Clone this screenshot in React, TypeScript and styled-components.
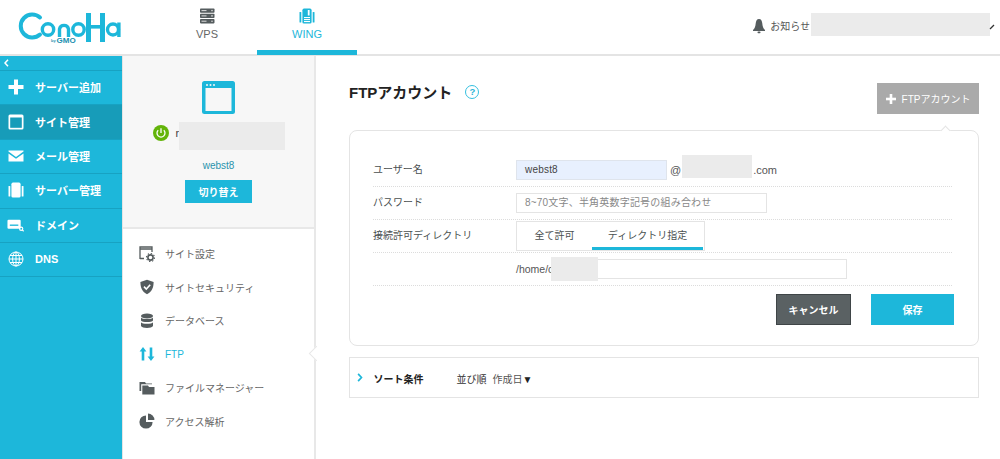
import React from "react";
import styled, { createGlobalStyle } from "styled-components";

const FONT = `"Liberation Sans", "Noto Sans CJK JP", sans-serif`;
const BLUE = "#1db7da";

const Global = createGlobalStyle`
  html, body { margin: 0; padding: 0; background: #fff; overflow: hidden; }
  body { font-family: ${FONT}; color: #4a4f50; }
  * { box-sizing: border-box; }
`;

const Page = styled.div`
  width: 1000px; height: 459px; display: flex; flex-direction: column; overflow: hidden; position: relative;
`;
const Header = styled.header`
  height: 56px; flex: none; display: flex; border-bottom: 2px solid #e4e4e4; position: relative;
`;
const LogoBox = styled.div`
  width: 157px; flex: none; padding: 8px 0 0 18px;
`;
const TopTab = styled.div<{ $active?: boolean }>`
  width: 100px; height: 55px; display: flex; flex-direction: column; align-items: center; padding-top: 8px; gap: 3px;
  font-size: 11px; line-height: 14px; color: ${(p) => (p.$active ? BLUE : "#666")};
  border-bottom: ${(p) => (p.$active ? `5px solid ${BLUE}` : "none")};
`;
const Notice = styled.div`
  margin-left: auto; margin-right: 190px; display: flex; align-items: center; gap: 4px; font-size: 10px; color: #555; height: 51px;
`;
const Mask = styled.div<{ $x: number; $y: number; $w: number; $h: number }>`
  position: absolute; left: ${(p) => p.$x}px; top: ${(p) => p.$y}px; width: ${(p) => p.$w}px; height: ${(p) => p.$h}px; background: #ebebeb;
`;
const Tick = styled.svg`
  position: absolute; left: 989px; top: 24px;
`;
const Body = styled.div`
  flex: 1; display: flex; min-height: 0;
`;
const Sidebar = styled.nav`
  width: 123px; flex: none; background: ${BLUE}; border-right: 1px solid #e4e4e4; display: flex; flex-direction: column;
`;
const Collapse = styled.div`
  height: 15px; padding-left: 4px; border-bottom: 1px solid #17a2c2; display: flex; align-items: center;
`;
const SideItem = styled.div<{ $active?: boolean }>`
  height: 34.4px; flex: none; display: flex; align-items: center; padding-left: 7px; padding-bottom: 1px; gap: 11px; color: #fff;
  font-size: 11px; font-weight: 700; border-bottom: 1px solid #17a2c2;
  background: ${(p) => (p.$active ? "#179cb9" : "transparent")};
`;
const SideIcon = styled.span`
  width: 17px; height: 17px; display: flex; align-items: center; justify-content: center; flex: none;
`;
const Second = styled.aside`
  width: 193px; flex: none; border-right: 2px solid #e8e8e8; display: flex; flex-direction: column; position: relative;
`;
const SiteBox = styled.div`
  height: 173px; flex: none; background: #f7f7f7; border-bottom: 2px solid #e8e8e8; display: flex; flex-direction: column; align-items: center; padding-top: 25px;
`;
const StatusRow = styled.div`
  display: flex; align-items: center; width: 130px; margin: 9px 0 0 0; height: 20px; font-size: 11px; color: #444; gap: 7px; position: relative; left: -1px;
`;
const SiteName = styled.div`
  margin-top: 16px; font-size: 10px; line-height: 14px; color: #2a93ad;
`;
const SwitchBtn = styled.div`
  margin-top: 7px; width: 67px; height: 23px; background: ${BLUE}; color: #fff; font-size: 10px; font-weight: 700; display: flex; align-items: center; justify-content: center;
`;
const SubNav = styled.div`
  display: flex; flex-direction: column; padding-top: 8px;
`;
const SubItem = styled.div<{ $active?: boolean }>`
  height: 33.5px; flex: none; display: flex; align-items: center; padding-left: 16px; gap: 10px; font-size: 10px; color: ${(p) => (p.$active ? BLUE : "#666")};
`;
const Notch = styled.span`
  position: absolute; right: -2px; top: 292px; width: 11px; height: 11px; background: #fff; border-left: 1.5px solid #e8e8e8; border-bottom: 1.5px solid #e8e8e8; transform: translateX(6px) rotate(45deg); transform-origin: center;
`;
const Main = styled.main`
  flex: 1; padding: 0 22px 0 33px; position: relative;
`;
const TitleRow = styled.div`
  height: 74px; display: flex; align-items: flex-start; position: relative;
`;
const Title = styled.h1`
  margin: 27px 0 0 0; font-size: 15px; line-height: 20px; font-weight: 700; color: #222;
`;
const Help = styled.span`
  margin: 29px 0 0 13px; width: 14px; height: 14px; border: 1.5px solid #35c0e0; border-radius: 50%; color: #2bb5d6; font-size: 9.5px; line-height: 11px; text-align: center; font-weight: 700;
`;
const AddBtn = styled.div`
  margin: 27px 0 0 auto; width: 102px; height: 31px; background: #aaaaaa; color: #fff; font-size: 10px; display: flex; align-items: center; justify-content: center; gap: 6px;
`;
const Card = styled.section`
  width: 630px; height: 216px; border: 1.5px solid #e4e4e4; border-radius: 8px; padding: 23px 26px 0 23px; position: relative; display: flex; flex-direction: column;
`;
const CardCaret = styled.span`
  position: absolute; right: 29px; top: -4px; width: 7px; height: 7px; background: #fff; border-left: 1.5px solid #e4e4e4; border-top: 1.5px solid #e4e4e4; transform: rotate(45deg);
`;
const Row = styled.div<{ $h: number }>`
  height: ${(p) => p.$h}px; flex: none; display: flex; align-items: center; border-bottom: 1.5px dotted #dcdcdc;
`;
const Label = styled.div`
  width: 143px; flex: none; font-size: 10px; line-height: 12px; padding-bottom: 1px; color: #4a4f50;
`;
const Field = styled.div<{ $w: number; $fill?: boolean; $ph?: boolean }>`
  width: ${(p) => p.$w}px; height: 20px; flex: none; border: 1.5px solid ${(p) => (p.$fill ? "#dfe4ec" : "#e4e4e4")}; background: ${(p) => (p.$fill ? "#e8f0fe" : "#fff")};
  font-size: 10px; line-height: 17px; padding-left: 8px; color: ${(p) => (p.$ph ? "#888" : "#444")}; letter-spacing: 0.2px;
`;
const Domain = styled.div`
  margin-left: 3px; font-size: 11px; color: #555; width: 107px; display: flex; justify-content: space-between;
`;
const Toggle = styled.div`
  width: 189px; height: 30px; border: 1.5px solid #e4e4e4; display: flex; font-size: 10px; color: #4a4f50;
`;
const ToggleItem = styled.div<{ $active?: boolean; $w: number }>`
  width: ${(p) => p.$w}px; display: flex; align-items: center; justify-content: center; padding-bottom: 1px;
  border-bottom: 3px solid ${(p) => (p.$active ? BLUE : "transparent")};
`;
const PathText = styled.div`
  width: 35px; flex: none; font-size: 10.5px; color: #555; white-space: nowrap;
`;
const Actions = styled.div`
  display: flex; justify-content: flex-end; gap: 20px; margin-top: 8px; width: 581px;
`;
const ActionBtn = styled.div<{ $dark?: boolean }>`
  width: ${(p) => (p.$dark ? 75 : 83)}px; height: 31px; background: ${(p) => (p.$dark ? "#5a6163" : BLUE)}; color: #fff; font-size: 10px; font-weight: 700; display: flex; align-items: center; justify-content: center;
  border: ${(p) => (p.$dark ? "1px solid #3f4547" : "none")};
`;
const SortBox = styled.section`
  width: 630px; height: 41px; margin-top: 11px; border: 1.5px solid #e4e4e4; display: flex; align-items: center; padding-left: 7px; font-size: 10px; color: #333;
`;
const SortTitle = styled.span`
  margin-left: 11px; width: 65px; font-weight: 700; color: #222; font-size: 10px; padding-top: 1px;
`;
const SortLabel = styled.span`
  margin-left: 18px; font-size: 10px; padding-top: 1px;
`;
const SortValue = styled.span`
  margin-left: 6px; font-size: 10px; color: #555; padding-top: 1px;
`;
const SortArrow = styled.span`
  font-size: 10px; color: #222;
`;

const ServerIcon = () => (
  <svg width="16" height="16" viewBox="0 0 16 16">
    {[0.5, 5.8, 11.1].map((y) => (
      <g key={y}>
        <rect x="1" y={y} width="14.5" height="4.3" rx="0.8" fill="#555c5e" />
        <rect x="2.5" y={y + 1.6} width="5" height="1" fill="#ddd" />
        <circle cx="13" cy={y + 2.1} r="0.8" fill="#ddd" />
      </g>
    ))}
  </svg>
);
const WingIcon = ({ color = BLUE }: { color?: string }) => (
  <svg width="16" height="16" viewBox="0 0 16 16" fill={color}>
    <rect x="0.5" y="4" width="1.8" height="10.5" rx="0.6" />
    <rect x="13.7" y="4" width="1.8" height="10.5" rx="0.6" />
    <path d="M3.4 2.2 A1.6 1.6 0 0 1 5 .6 H11 A1.6 1.6 0 0 1 12.6 2.2 V14 A1.6 1.6 0 0 1 11 15.6 H5 A1.6 1.6 0 0 1 3.4 14Z" />
    <rect x="5" y="9" width="6" height="1.1" fill="#fff" />
    <rect x="5" y="11" width="6" height="1.1" fill="#fff" />
    <rect x="5" y="13" width="6" height="1.1" fill="#fff" />
    <rect x="8.8" y="2" width="1.8" height="5.5" fill="#fff" />
  </svg>
);
const Logo = () => (
  <svg width="104" height="40" viewBox="0 0 104 40">
    <path d="M22 9.5 A11.5 11.5 0 1 0 22 26.5" fill="none" stroke={BLUE} strokeWidth="4" strokeLinecap="round" />
    <circle cx="30" cy="21.5" r="5.7" fill="none" stroke={BLUE} strokeWidth="3.4" />
    <path d="M41.5 29 V21 A4.6 4.6 0 0 1 50.5 21 V29" fill="none" stroke={BLUE} strokeWidth="3.4" />
    <circle cx="60.5" cy="21.5" r="5.7" fill="none" stroke={BLUE} strokeWidth="3.4" />
    <rect x="68" y="5" width="5" height="29" fill={BLUE} />
    <rect x="72" y="17" width="11" height="3.6" fill={BLUE} />
    <rect x="82" y="5" width="5" height="29" fill={BLUE} />
    <circle cx="95" cy="21.5" r="5.5" fill="none" stroke={BLUE} strokeWidth="3.4" />
    <rect x="99.2" y="14.5" width="3.4" height="14.5" fill={BLUE} />
    <text x="33" y="34" fontFamily="Liberation Sans" fontSize="4" fontWeight="700" fill="#1a8fb0">by</text>
    <text x="38.5" y="34.5" fontFamily="Liberation Sans" fontSize="8" fontWeight="700" fill="#1a8fb0">GMO</text>
  </svg>
);
const Bell = () => (
  <svg width="14" height="16" viewBox="0 0 14 16" fill="#555c5e">
    <path d="M7 1 C4.8 1 4 3 3.7 5.5 C3.4 8.5 2.8 10.5 1 12 V13 H13 V12 C11.2 10.5 10.6 8.5 10.3 5.5 C10 3 9.2 1 7 1Z" />
    <rect x="5.5" y="13.6" width="3" height="1.6" rx="0.8" />
  </svg>
);
const Plus = () => (
  <svg width="16" height="16" viewBox="0 0 16 16" fill="#fff">
    <rect x="6" y="0.5" width="4" height="15" />
    <rect x="0.5" y="6" width="15" height="4" />
  </svg>
);
const WinWhite = () => (
  <svg width="16" height="16" viewBox="0 0 16 16">
    <rect x="0.5" y="0.5" width="15" height="15" rx="1.5" fill="#fff" />
    <rect x="2.2" y="3.5" width="11.6" height="10.3" fill="#179cb9" />
  </svg>
);
const Mail = () => (
  <svg width="16" height="12" viewBox="0 0 16 12" fill="#fff">
    <path d="M0.5 0.5 H15.5 V1.6 L8 7 L0.5 1.6Z" />
    <path d="M0.5 3.4 L8 8.8 L15.5 3.4 V11.5 H0.5Z" />
  </svg>
);
const DomainIcon = () => (
  <svg width="18" height="14" viewBox="0 0 18 14">
    <rect x="0.5" y="1.5" width="14" height="9.5" rx="1.2" fill="#fff" />
    <rect x="3" y="6.5" width="9" height="1.4" fill={BLUE} />
    <circle cx="15" cy="11" r="1.7" fill="none" stroke="#fff" strokeWidth="1.2" />
    <line x1="16" y1="12" x2="17.6" y2="13.6" stroke="#fff" strokeWidth="1.2" />
  </svg>
);
const Globe = () => (
  <svg width="16" height="16" viewBox="0 0 16 16" fill="none" stroke="#fff" strokeWidth="1">
    <circle cx="8" cy="8" r="7" />
    <ellipse cx="8" cy="8" rx="3.4" ry="7" />
    <line x1="8" y1="1" x2="8" y2="15" />
    <line x1="1" y1="8" x2="15" y2="8" />
    <line x1="2" y1="4.5" x2="14" y2="4.5" />
    <line x1="2" y1="11.5" x2="14" y2="11.5" />
  </svg>
);
const WindowBig = () => (
  <svg width="33" height="33" viewBox="0 0 33 33">
    <rect x="0" y="0" width="33" height="33" rx="2.5" fill={BLUE} />
    <rect x="3.5" y="7" width="26" height="23" fill="#f7f7f7" />
    <circle cx="5" cy="4" r="1" fill="#f7f7f7" />
    <circle cx="8.5" cy="4" r="1" fill="#f7f7f7" />
    <circle cx="12" cy="4" r="1" fill="#f7f7f7" />
  </svg>
);
const Power = () => (
  <svg width="16" height="16" viewBox="0 0 16 16">
    <circle cx="8" cy="8" r="8" fill="#63b40a" />
    <path d="M5.2 5.2 A4 4 0 1 0 10.8 5.2" fill="none" stroke="#fff" strokeWidth="1.3" />
    <line x1="8" y1="3.2" x2="8" y2="8" stroke="#fff" strokeWidth="1.3" />
  </svg>
);
const SiteSettings = () => (
  <svg width="16" height="16" viewBox="0 0 16 16">
    <path d="M1 13 V1 H13 V6 M1 1 H13 V3 H1Z M1 12.5 H5" fill="none" stroke="#555c5e" strokeWidth="1.3" />
    <circle cx="11.5" cy="11.5" r="2.6" fill="none" stroke="#555c5e" strokeWidth="1.6" />
    <circle cx="11.5" cy="11.5" r="4" fill="none" stroke="#555c5e" strokeWidth="1.1" strokeDasharray="1.4 1.7" />
  </svg>
);
const Shield = () => (
  <svg width="16" height="16" viewBox="0 0 16 16">
    <path d="M8 0.8 L14.6 3 C14.6 9 12.5 13 8 15.2 C3.5 13 1.4 9 1.4 3Z" fill="#555c5e" />
    <path d="M5 7.6 L7.3 10 L11.2 5.8" fill="none" stroke="#fff" strokeWidth="1.6" />
  </svg>
);
const Db = () => (
  <svg width="16" height="16" viewBox="0 0 16 16" fill="#555c5e">
    <ellipse cx="8" cy="3" rx="6" ry="2.5" />
    <path d="M2 4.6 C3 6.6 13 6.6 14 4.6 V7.6 C13 9.6 3 9.6 2 7.6Z" />
    <path d="M2 9.2 C3 11.2 13 11.2 14 9.2 V13 C13 15.6 3 15.6 2 13Z" />
  </svg>
);
const Arrows = () => (
  <svg width="16" height="16" viewBox="0 0 16 16" fill={BLUE}>
    <path d="M4 1 L7.4 5.4 H5.3 V14.5 H2.7 V5.4 H.6Z" />
    <path d="M12 15 L15.4 10.6 H13.3 V1.5 H10.7 V10.6 H8.6Z" />
  </svg>
);
const Folder = () => (
  <svg width="16" height="14" viewBox="0 0 16 14" fill="#555c5e">
    <path d="M0.5 10 V1 H6 L7 2.5 H13 V3.3 H2.2 V10Z" />
    <path d="M3.3 13.5 V4.5 H9 L10 6 H15.5 V13.5Z" />
  </svg>
);
const Pie = () => (
  <svg width="16" height="16" viewBox="0 0 16 16" fill="#555c5e">
    <path d="M7 2.4 A6.6 6.6 0 1 0 13.6 9 H7Z" />
    <path d="M9 .6 A6.4 6.4 0 0 1 15.4 7 H9Z" />
  </svg>
);
const Chevron = ({ color, size }: { color: string; size: number }) => (
  <svg width={size * 0.62} height={size} viewBox="0 0 5 8" fill="none" stroke={color} strokeWidth="1.5">
    <path d="M1 .8 L4 4 L1 7.2" />
  </svg>
);

const side: [React.ReactNode, string, boolean?][] = [
  [<Plus />, "サーバー追加"],
  [<WinWhite />, "サイト管理", true],
  [<Mail />, "メール管理"],
  [<WingIcon color="#fff" />, "サーバー管理"],
  [<DomainIcon />, "ドメイン"],
  [<Globe />, "DNS"],
];
const sub: [React.ReactNode, string, boolean?][] = [
  [<SiteSettings />, "サイト設定"],
  [<Shield />, "サイトセキュリティ"],
  [<Db />, "データベース"],
  [<Arrows />, "FTP", true],
  [<Folder />, "ファイルマネージャー"],
  [<Pie />, "アクセス解析"],
];

export default function App() {
  return (
    <Page>
      <Global />
      <Header>
        <LogoBox><Logo /></LogoBox>
        <TopTab><ServerIcon />VPS</TopTab>
        <TopTab $active><WingIcon />WING</TopTab>
        <Notice><Bell />お知らせ</Notice>
      </Header>
      <Body>
        <Sidebar>
          <Collapse>
            <svg width="5" height="8" viewBox="0 0 5 8" fill="none" stroke="#fff" strokeWidth="1.5"><path d="M4 .8 L1 4 L4 7.2" /></svg>
          </Collapse>
          {side.map(([icon, label, active]) => (
            <SideItem key={label} $active={active}><SideIcon>{icon}</SideIcon>{label}</SideItem>
          ))}
        </Sidebar>
        <Second>
          <SiteBox>
            <WindowBig />
            <StatusRow><Power />r</StatusRow>
            <SiteName>webst8</SiteName>
            <SwitchBtn>切り替え</SwitchBtn>
          </SiteBox>
          <SubNav>
            {sub.map(([icon, label, active]) => (
              <SubItem key={label} $active={active}>{icon}{label}</SubItem>
            ))}
          </SubNav>
          <Notch />
        </Second>
        <Main>
          <TitleRow>
            <Title>FTPアカウント</Title>
            <Help>?</Help>
            <AddBtn>
              <svg width="10" height="10" viewBox="0 0 10 10" fill="#fff"><rect x="3.7" width="2.6" height="10" /><rect y="3.7" width="10" height="2.6" /></svg>
              FTPアカウント
            </AddBtn>
          </TitleRow>
          <Card>
            <CardCaret />
            <Row $h={33}>
              <Label>ユーザー名</Label>
              <Field $w={151} $fill>webst8</Field>
              <Domain>@<span>.com</span></Domain>
            </Row>
            <Row $h={33}>
              <Label>パスワード</Label>
              <Field $w={251} $ph>8~70文字、半角英数字記号の組み合わせ</Field>
            </Row>
            <Row $h={33}>
              <Label>接続許可ディレクトリ</Label>
              <Toggle>
                <ToggleItem $w={75}>全て許可</ToggleItem>
                <ToggleItem $w={111} $active>ディレクトリ指定</ToggleItem>
              </Toggle>
            </Row>
            <Row $h={33}>
              <Label />
              <PathText>/home/c</PathText>
              <Field $w={296} />
            </Row>
            <Actions>
              <ActionBtn $dark>キャンセル</ActionBtn>
              <ActionBtn>保存</ActionBtn>
            </Actions>
          </Card>
          <SortBox>
            <Chevron color={BLUE} size={9} />
            <SortTitle>ソート条件</SortTitle>
            <SortLabel>並び順</SortLabel>
            <SortValue>作成日<SortArrow>▼</SortArrow></SortValue>
          </SortBox>
        </Main>
      </Body>
      <Mask $x={811} $y={13} $w={179} $h={23} />
      <Mask $x={179} $y={122} $w={106} $h={28} />
      <Mask $x={682} $y={155} $w={70} $h={23} />
      <Mask $x={551} $y={257} $w={47} $h={24} />
      <Tick width="6" height="6" viewBox="0 0 6 6"><path d="M1 5 L5 1" stroke="#333" strokeWidth="1.3" /></Tick>
    </Page>
  );
}
